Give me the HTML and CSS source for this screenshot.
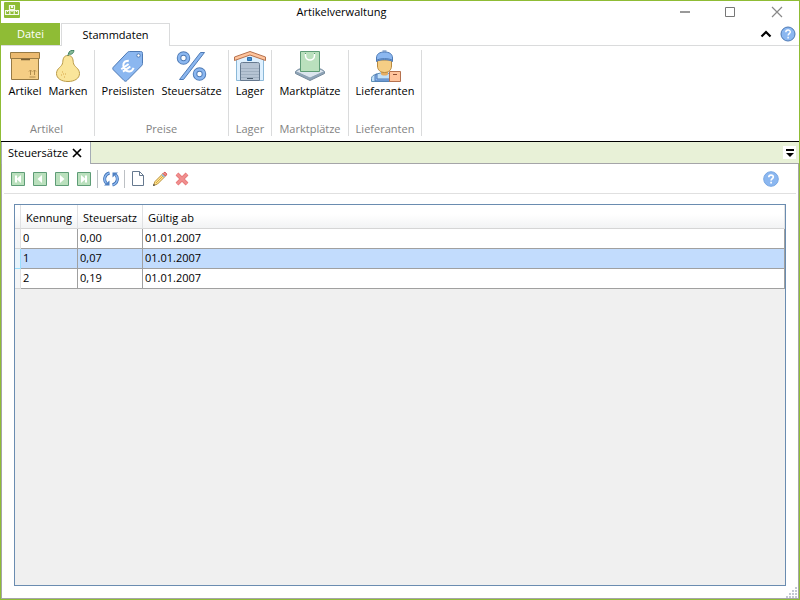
FILE: index.html
```html
<!DOCTYPE html>
<html lang="de">
<head>
<meta charset="utf-8">
<title>Artikelverwaltung</title>
<link rel="stylesheet" href="styles.css">
</head>
<body>
<div class="window">
  <header class="titlebar">
    <svg class="app-icon" width="16" height="16" viewBox="0 0 16 16"><rect width="16" height="16" rx="1" fill="#8fbc35"/><g fill="none" stroke="#f4f9e8" stroke-width="1.200"><path d="M5.500 3.500h5v4h-5zM7.500 3.500v2h1v-2M1.500 8.500h4.300v4H1.500zM5.800 8.500h4.400v4H5.800zM10.200 8.500h4.300v4h-4.300zM3.500 8.500v1.500M8 8.500v1.500M12.500 8.500v1.500"/></g></svg>
    <h1 class="title">Artikelverwaltung</h1>
    <div class="window-buttons">
      <button class="window-button" aria-label="Minimieren"><svg width="12" height="12" viewBox="0 0 12 12"><path d="M1 6h10" stroke="#999" stroke-width="2"/></svg></button>
      <button class="window-button" aria-label="Maximieren"><svg width="12" height="12" viewBox="0 0 12 12"><path d="M.500 1.500h9v9h-9z" fill="none" stroke="#777"/></svg></button>
      <button class="window-button" aria-label="Schließen"><svg width="12" height="12" viewBox="0 0 12 12"><path d="M1 1l10 10M11 1L1 11" stroke="#888" stroke-width="1.200"/></svg></button>
    </div>
  </header>

  <nav class="ribbon-tabs">
    <button class="file-tab">Datei</button>
    <button class="ribbon-tab">Stammdaten</button>
    <div class="ribbon-tools">
      <button class="icon-button" aria-label="Menüband minimieren"><svg width="12" height="16" viewBox="0 0 12 16"><path d="M1.500 10.500L6 6l4.500 4.500" fill="none" stroke="#000" stroke-width="2.200"/></svg></button>
      <button class="icon-button" aria-label="Hilfe"><svg width="16" height="16" viewBox="0 0 16 16"><circle cx="8" cy="8" r="7" fill="#8bb7f0" stroke="#4e7ab5"/><path d="M5.800 6.300c0-3 4.500-2.900 4.500-.3 0 1.600-2.200 1.700-2.200 3.600M8.100 10.800v1.600" fill="none" stroke="#fff" stroke-width="1.400"/></svg></button>
    </div>
  </nav>

  <section class="ribbon">
    <div class="group group-artikel">
      <div class="group-items">
        <button class="big-button"><svg width="32" height="32" viewBox="0 0 32 32"><path d="M2.500 9v20.500h27V9" fill="#f5ce85" stroke="#967a44"/><path d="M1.500 2.500h29v6h-29z" fill="#ecba70" stroke="#967a44"/><path d="M12 9.500h9" stroke="#7a5f30" stroke-width="1.500"/><path d="M20.500 27h6M21.500 25v-5M25.500 25v-5M20 21.500l1.500-1.500 1.500 1.500M24 21.500l1.500-1.500 1.500 1.500" fill="none" stroke="#b08c4c"/></svg><span>Artikel</span></button>
        <button class="big-button"><svg width="32" height="32" viewBox="0 0 32 32"><path d="M16 5.500c-4.500 0-5 3.500-5.300 7C10.300 17 4.500 18 4.500 23.500c0 5 5 8 11.500 8s11.500-3 11.500-8c0-5.500-5.800-6.500-6.200-11-.3-3.500-.8-7-5.300-7z" fill="#fae59a" stroke="#ba9b48"/><path d="M16 6c0-1.500.5-2.500 1.500-3.500" fill="none" stroke="#3e8060"/><path d="M16.500 4c0-3 3-4 5.500-3.500C21.500 3.500 19.500 5 16.500 4z" fill="#88ba98" stroke="#3e8060"/><path d="M10 22h1M13 24h1M9 25h1M12 27h1M11 24h1" stroke="#d8a648"/></svg><span>Marken</span></button>
      </div>
      <div class="group-label">Artikel</div>
    </div>
    <div class="group group-preise">
      <div class="group-items">
        <button class="big-button wide"><svg width="32" height="32" viewBox="0 0 32 32"><path d="M17.500 1.500h11c1.500 0 2 .5 2 2v10c0 1-.3 1.500-1 2.300L15 30.500c-1 1-2 1-3 0L1.500 20c-1-1-1-2 0-3L15.500 2.300c.7-.6 1-.8 2-.8z" fill="#8bb7f0" stroke="#4e7ab5"/><circle cx="26.500" cy="5.500" r="1.700" fill="#fff" stroke="#4e7ab5"/><g transform="rotate(-35 15 17)" fill="none" stroke="#fff" stroke-width="2"><path d="M20 13c-5-3.500-8 0-8 4s3 7.500 8 4.500M9 15.500h9M9 18.500h9"/></g></svg><span>Preislisten</span></button>
        <button class="big-button wider"><svg width="32" height="32" viewBox="0 0 32 32"><path d="M24.500 2.500h4l-21 27h-4z" fill="#8bb7f0" stroke="#4e7ab5"/><g fill="none"><circle cx="7.500" cy="8" r="4.500" stroke="#4e7ab5" stroke-width="4.500"/><circle cx="7.500" cy="8" r="4.500" stroke="#8bb7f0" stroke-width="2.700"/><circle cx="23.500" cy="24" r="4.500" stroke="#4e7ab5" stroke-width="4.500"/><circle cx="23.500" cy="24" r="4.500" stroke="#8bb7f0" stroke-width="2.700"/></g></svg><span>Steuersätze</span></button>
      </div>
      <div class="group-label">Preise</div>
    </div>
    <div class="group group-lager">
      <div class="group-items">
        <button class="big-button"><svg width="32" height="32" viewBox="0 0 32 32"><path d="M2.500 8.500L16 3l13.500 5.500v22h-27z" fill="#dff0fe" stroke="#8ab8d8"/><path d="M6.500 13.500h19V31h-19z" fill="#c5e3f8"/><path d="M6.500 14.500c0-1.500.5-2 2-2h15c1.500 0 2 .5 2 2v16h-19z" fill="#b6c3d3" stroke="#66798f"/><path d="M7 18.500h18M7 21.500h18M7 24.500h18M7 27.500h18" stroke="#a0afc0"/><path d="M13 28.500h6" stroke="#4a5a6c"/><path d="M13.500 7.500h4v3h-4z" fill="#4788c7" stroke="#2e70ae"/><path d="M.500 7L16 1.500 31.500 7v3.500L16 5 .500 10.500z" fill="#ffc49c" stroke="#b5714e"/></svg><span>Lager</span></button>
      </div>
      <div class="group-label">Lager</div>
    </div>
    <div class="group group-markt">
      <div class="group-items">
        <button class="big-button wider"><svg width="32" height="32" viewBox="0 0 32 32"><path d="M1.500 21.500L5 19h22l3.500 2.500v2L16 30.500l-14.500-7z" fill="#8fa5b9" stroke="#788b9c"/><path d="M1.500 21.500L5 19.500h22l3.500 2L16 28z" fill="#dce5ee" stroke="#8ba0b2"/><path d="M6.500 1.500h19v20h-19z" fill="#bae0bd" stroke="#5e9c76"/><path d="M11.500 4v1.500c0 6 9 6 9 0V4" fill="none" stroke="#fff" stroke-width="1.500"/><path d="M11 3.500h1M20 3.500h1" stroke="#5e9c76"/></svg><span>Marktplätze</span></button>
      </div>
      <div class="group-label">Marktplätze</div>
    </div>
    <div class="group group-liefer">
      <div class="group-items">
        <button class="big-button wider"><svg width="32" height="32" viewBox="0 0 32 32"><path d="M2.500 31.500v-3c0-2.500 2-3.500 5-4.500l4-1h7l4 1c3 1 5 2 5 4.500v3z" fill="#c2e1fa" stroke="#5f8fb5"/><path d="M8 24v5h14v-5l2 1v6H6v-6z" fill="#8bb7f0" stroke="#4e7ab5"/><path d="M12 19h7v5c0 2-7 2-7 0z" fill="#e6ae64"/><path d="M8.500 10v6c0 4 3 6.500 7 6.500s7-2.500 7-6.500v-6z" fill="#f5ce85" stroke="#b8893f"/><path d="M7.500 11.500V8c0-4 3-6 8-6s8 2 8 6v3.500C20 9 11 9 7.500 11.500z" fill="#8bb7f0" stroke="#4e7ab5"/><path d="M7 10.500c4-2.500 13-2.500 17 0M13.500 1h4" fill="none" stroke="#4e7ab5"/><path d="M20.500 21.500h11v10h-11z" fill="#ffc49c" stroke="#b5714e"/><path d="M24 24.500h4" stroke="#8f4f34"/></svg><span>Lieferanten</span></button>
      </div>
      <div class="group-label">Lieferanten</div>
    </div>
  </section>

  <div class="doc-tabs">
    <div class="doc-tab">Steuersätze<button class="icon-button" aria-label="Tab schließen"><svg width="10" height="10" viewBox="0 0 10 10"><path d="M1 1l8 8M9 1L1 9" stroke="#000" stroke-width="1.700"/></svg></button></div>
    <div class="doc-strip"><button class="tab-menu" aria-label="Geöffnete Tabs"><svg width="13" height="13" viewBox="0 0 13 13"><path d="M3 3h8v2H3zM3 7h8L7 11z" fill="#000"/></svg></button></div>
  </div>

  <main class="document">
    <div class="toolbar">
      <button class="tool" aria-label="Erster"><svg width="14" height="14" viewBox="0 0 14 14"><path d="M.500.500h13v13H.500z" fill="#bae0bd" stroke="#5e9c76"/><path d="M4 3.500h2v3L10 3v8L6 7.500v3H4z" fill="#fff"/></svg></button>
      <button class="tool" aria-label="Zurück"><svg width="14" height="14" viewBox="0 0 14 14"><path d="M.500.500h13v13H.500z" fill="#bae0bd" stroke="#5e9c76"/><path d="M9 3v8L4.500 7z" fill="#fff"/></svg></button>
      <button class="tool" aria-label="Weiter"><svg width="14" height="14" viewBox="0 0 14 14"><path d="M.500.500h13v13H.500z" fill="#bae0bd" stroke="#5e9c76"/><path d="M5 3v8l4.500-4z" fill="#fff"/></svg></button>
      <button class="tool" aria-label="Letzter"><svg width="14" height="14" viewBox="0 0 14 14"><path d="M.500.500h13v13H.500z" fill="#bae0bd" stroke="#5e9c76"/><path d="M10 3.500H8v3L4 3v8l4-3.500v3h2z" fill="#fff"/></svg></button>
      <span class="divider"></span>
      <button class="tool" aria-label="Aktualisieren"><svg width="16" height="16" viewBox="0 0 16 16"><g fill="none" stroke="#3f6fb0" stroke-width="3"><path d="M6.500 2C1 3.500.500 9.500 3.500 12.500M9.500 14c5.500-1.500 6-7.500 3-10.500"/></g><g fill="none" stroke="#8bb7f0" stroke-width="1.500"><path d="M6.500 2C1 3.500.500 9.500 3.500 12.500M9.500 14c5.500-1.500 6-7.500 3-10.500"/></g><path d="M1 14.500h5.500V9.500zM15 1.500H9.500v5z" fill="#4e80c2"/></svg></button>
      <span class="divider"></span>
      <button class="tool" aria-label="Neu"><svg width="16" height="16" viewBox="0 0 16 16"><path d="M2.500.500h7l4 4v10h-11zM9.500.500v4h4" fill="#fff" stroke="#66798f"/></svg></button>
      <button class="tool" aria-label="Bearbeiten"><svg width="16" height="16" viewBox="0 0 16 16"><path d="M1.500 14.500l1.500-4L11 2.500l2.500 2.500-8 8z" fill="#ffe58f" stroke="#b98f3b"/><path d="M4 12l7.500-7.500" stroke="#d5a848"/><path d="M11 2.500l1-1c1-1 3.500 1.500 2.500 2.500l-1 1z" fill="#f78f8f" stroke="#c74343" stroke-width=".800"/><path d="M10 3.500L12.500 6" stroke="#8bb7f0" stroke-width="1.200"/><path d="M1 15l.700-2.200L3.200 14.300z" fill="#36404d"/></svg></button>
      <button class="tool" aria-label="Löschen"><svg width="16" height="16" viewBox="0 0 16 16"><path d="M3 3l10 10M13 3L3 13" stroke="#e87c7c" stroke-width="4"/><path d="M3 3l10 10M13 3L3 13" stroke="#f09090" stroke-width="2"/></svg></button>
      <button class="tool help" aria-label="Hilfe"><svg width="16" height="16" viewBox="0 0 16 16"><circle cx="8" cy="8" r="7.300" fill="#8bb7f0" stroke="#78a7e3"/><path d="M5.800 6.300c0-3 4.500-2.900 4.500-.3 0 1.600-2.200 1.700-2.200 3.600M8.100 10.800v1.600" fill="none" stroke="#fff" stroke-width="1.700"/></svg></button>
    </div>
    <div class="grid-box">
      <table class="grid">
        <thead><tr><th class="handle"></th><th class="kennung">Kennung</th><th class="satz">Steuersatz</th><th>Gültig ab</th></tr></thead>
        <tbody>
          <tr><td class="handle"></td><td>0</td><td>0,00</td><td>01.01.2007</td></tr>
          <tr class="selected"><td class="handle"></td><td>1</td><td>0,07</td><td>01.01.2007</td></tr>
          <tr><td class="handle"></td><td>2</td><td>0,19</td><td>01.01.2007</td></tr>
        </tbody>
      </table>
    </div>
    <svg class="grip" width="12" height="12" viewBox="0 0 12 12"><path d="M9 1h2v2H9zM9 4h2v2H9zM6 4h2v2H6zM9 7h2v2H9zM6 7h2v2H6zM3 7h2v2H3zM9 10h2v2H9zM6 10h2v2H6zM3 10h2v2H3zM0 10h2v2H0z" fill="#c3c9d2"/></svg>
  </main>
</div>
</body>
</html>
```

FILE: styles.css
```css
* { box-sizing: border-box; }

body {
  margin: 0;
  background: #fff;
  color: #000;
  font: 11px/16px "Open Sans", "Noto Sans", sans-serif;
}

button {
  margin: 0;
  padding: 0;
  border: 0;
  background: none;
  color: inherit;
  font: inherit;
}

svg { display: block; }

.window {
  display: flex;
  flex-direction: column;
  min-height: 100vh;
  border: 1px solid #8fbc35;
}

.titlebar {
  display: flex;
  align-items: center;
  height: 22px;
  padding: 0 16px 0 3px;
}

.app-icon { margin-bottom: 4px; }

.title {
  flex: 1;
  margin: 0;
  font-size: 11px;
  font-weight: 400;
  text-align: center;
}

.window-buttons {
  display: flex;
  gap: 34px;
  padding-left: 16px;
}

.ribbon-tabs {
  display: flex;
  height: 23px;
  border-bottom: 1px solid #dadbdc;
}

.file-tab {
  width: 59px;
  height: 22px;
  background: #8fbc35;
  color: #fff;
}

.ribbon-tab {
  width: 109px;
  height: 23px;
  margin-left: 1px;
  border: 1px solid #dadbdc;
  border-bottom: 0;
  background: #fff;
}

.ribbon-tools {
  display: flex;
  align-items: center;
  gap: 8px;
  margin-left: auto;
  padding-right: 3px;
}

.ribbon {
  display: flex;
  height: 96px;
  padding: 4px 0 5px;
  border-bottom: 1px solid #000;
}

.group {
  display: flex;
  flex-direction: column;
  justify-content: space-between;
  border-right: 1px solid #dadbdc;
}

.group-artikel { width: 94px; padding-right: 2px; }
.group-preise { width: 134px; }
.group-lager { width: 43px; }
.group-markt { width: 77px; }
.group-liefer { width: 73px; }

.group-items {
  display: flex;
  justify-content: center;
}

.big-button {
  display: flex;
  flex-direction: column;
  align-items: center;
  gap: 1px;
  width: 43px;
}

.big-button.wide { width: 60px; }
.big-button.wider { width: 67px; }

.group-label {
  color: #838383;
  line-height: 14px;
  text-align: center;
}

.doc-tabs {
  display: flex;
  height: 22px;
}

.doc-tab {
  display: flex;
  align-items: center;
  gap: 4px;
  width: 90px;
  padding-left: 6px;
  border-left: 1px solid #a5acb5;
  border-right: 1px solid #a5acb5;
}

.doc-strip {
  display: flex;
  flex: 1;
  align-items: center;
  justify-content: flex-end;
  padding-right: 3px;
  border-bottom: 1px solid #a5a5a8;
  background: #e8f1d7;
}

.tab-menu { background: #fff; }

.document {
  position: relative;
  display: flex;
  flex: 1;
  flex-direction: column;
  border: 1px solid #a5a5a8;
  border-top: 0;
}

.toolbar {
  display: flex;
  align-items: center;
  gap: 6px;
  height: 30px;
  margin: 0 2px;
  padding: 0 17px 0 6px;
  border-bottom: 1px solid #e0e0e0;
}

.tool {
  display: flex;
  justify-content: center;
  width: 16px;
}

.divider {
  width: 1px;
  height: 18px;
  margin: 0 -1px;
  background: #bcc0c4;
}

.help { margin-left: auto; }

.grid-box {
  flex: 1;
  margin: 10px 12px 12px;
  border: 1px solid #6a8cb0;
  background: #f0f0f0;
}

.grid {
  width: 100%;
  border-collapse: separate;
  border-spacing: 0;
  table-layout: fixed;
}

.grid th {
  height: 24px;
  padding: 2px 5px 0;
  border-right: 1px solid #e0e1e3;
  border-bottom: 1px solid #d5d5d5;
  background: linear-gradient(#fff 40%, #f2f3f4);
  font-weight: 400;
  text-align: left;
}

.grid td {
  height: 20px;
  padding: 0 2px 2px;
  border-right: 1px solid #a0a0a0;
  border-bottom: 1px solid #a0a0a0;
  background: #fff;
}

.grid .selected td { background: #c2dcfd; }

.grid .handle {
  width: 6px;
  padding: 0;
  border-right-color: #e0e1e3;
}

.grid td.handle {
  border-bottom-color: #d5d5d5;
  background: #f5f6f7;
}

.grid .selected td.handle {
  border-color: #99defd;
  background: #e8f4fc;
}

.kennung { width: 57px; }
.satz { width: 65px; }

.grip {
  position: absolute;
  right: 0;
  bottom: 0;
}
```
